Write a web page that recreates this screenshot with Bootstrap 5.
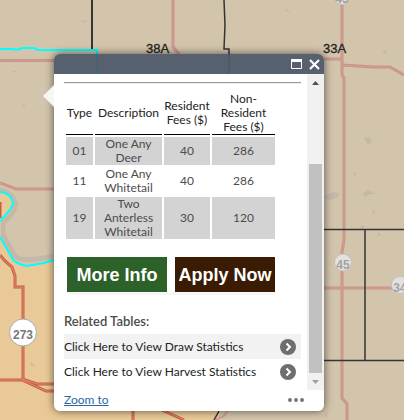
<!DOCTYPE html>
<html lang="en">
<head>
<meta charset="utf-8">
<meta name="viewport" content="width=device-width, initial-scale=1">
<title>Hunting Unit Map</title>
<link href="https://cdn.jsdelivr.net/npm/bootstrap@5.3.0/dist/css/bootstrap.min.css" rel="stylesheet">
<style>
body { font-family: Lato, "Liberation Sans", sans-serif; font-size: 12px; line-height: 14px; color: #4c4c4c; background: #d3c4ac; }
.map-view { min-height: 100vh; }
.map-canvas { position: absolute; inset: 0; width: 100%; height: 100%; }
.map-canvas text { font-family: "Liberation Sans", Arial, sans-serif; }
.map-popup { position: absolute; left: 54px; top: 54px; width: 270px; border-radius: 6px; box-shadow: 0 0 8px rgba(0,0,0,.6); }
.popup-arrow { position: absolute; left: -11px; top: 31px; width: 11px; height: 22px; background: #f6f6f6; clip-path: polygon(100% 0, 0 50%, 100% 100%); }
.popup-head { height: 20px; padding-right: 4px; gap: 7px; background: rgba(76,88,106,.93); border-radius: 6px 6px 0 0; }
.popup-body { padding: 8px 6px 6px 10px; }
.rule { height: 2px; background: #9a9a9a; border-bottom: 1px solid #eee; margin-bottom: 6px; }
.fees { width: 213px; table-layout: fixed; border-collapse: separate; border-spacing: 2px; text-align: center; }
.fees th { font-weight: 400; color: #222; border-bottom: 1px solid #000; padding: 0; }
.fees td { padding: 0; }
.fees tbody tr:nth-child(odd) td { background: #d3d3d3; }
.actions { width: 208px; gap: 8px; margin: 16px 0 0 3px; border-bottom: 3px solid #f7f7f7; }
.action { width: 100px; height: 35px; padding: 0; border: 0; border-radius: 0; color: #fff; font: 700 18px/32px "Liberation Sans", Arial, sans-serif; white-space: nowrap; }
.action:hover { color: #fff; }
.info-btn, .info-btn:hover { background: #2c6129; }
.apply-btn, .apply-btn:hover { background: #3a1c04; }
.related-title { font-size: 13px; font-weight: 600; margin: 19px 0 6px; line-height: 14px; }
.related-link { height: 25px; color: #222; padding-right: 5px; }
.related-link:first-of-type { background: #f2f2f2; }
.scroll-bar { width: 17px; background: #f1f1f1; }
.scroll-arrow { height: 17px; }
.scroll-thumb { width: 13px; height: 209px; background: #c1c1c1; }
.popup-foot { height: 21px; padding: 0 20px 2px 10px; }
.zoom-link { color: #2d67a5; font-size: 12px; }
.icon-btn { background: none; border: 0; padding: 0; line-height: 0; }
</style>
<script src="https://cdn.jsdelivr.net/npm/bootstrap@5.3.0/dist/js/bootstrap.bundle.min.js"></script>
</head>
<body>
<main class="map-view position-relative overflow-hidden">
<svg class="map-canvas" viewBox="0 0 404 420" preserveAspectRatio="xMinYMin slice" role="img" aria-label="Map of hunting units">
  <rect width="404" height="420" fill="#d3c4ac"/>
  <path d="M0 192Q10 192 13 201Q14 208 8 215L1 221V237L12 257Q17 264 27 266L54 260H230V400L216 420H0Z" fill="#e9c997"/>
  <g fill="none" stroke="#b9aea8" stroke-width="5" opacity=".55"><path d="M0 190Q12 192 16 204Q14 214 3 223V235L15 256Q22 263 54 256"/></g>
  <g fill="#beb3ad" opacity=".7"><path d="M324 197l8-5 8 1-2 4-9 4zM363 193l5-3 8 4-5 0-7 3zM364 138l5-1 3 4-4 4zM80 21l8-1-5 3zM286 9l5 3-6-1zM354 172l3 2-3 2zM372 210l4 2-3 3zM378 232l5 4-6-1zM360 225l5 1-3 4zM13 71l5 0-4 2zM23 104l3 1-3 2zM30 362l6 4-5 0zM324 415l4-3-2 6zM383 51l5-2-4 6z"/></g>
  <g fill="none" stroke="#c5948a" stroke-width="3">
    <path d="M0 60.500H54M173 0V47L179 54M342 0V75L344 78V240M343 65L373 67H390L404 75M324 59H342M0 183L16 189H54M344 240L342 252V398L347 404V420M324 288H404"/>
  </g>
  <g fill="none" stroke="#d99d91" stroke-width="1">
    <path d="M0 60.500H54M173 0V47L179 54M342 0V75L344 78V240M343 65L373 67H390L404 75M324 59H342M0 183L16 189H54M344 240L342 252V398L347 404V420M324 288H404"/>
  </g>
  <g fill="none" stroke="#c36045" stroke-width="3">
    <path d="M0 255L5 261L12 267L15 276V287H23V380M0 380H22L46 391H54M22 379L37 384H54M133 411V420M162 410L184 420M0 202V218"/>
  </g>
  <g fill="none" stroke="#e8896a" stroke-width="1">
    <path d="M0 255L5 261L12 267L15 276V287H23V380M0 380H22L46 391H54M22 379L37 384H54M133 411V420M162 410L184 420"/>
  </g>
  <path d="M219 411L214 420" stroke="#333" stroke-width="1.500"/>
  <path d="M228 410L224 416L216 420" fill="none" stroke="#d99d91" stroke-width="2"/>
  <g fill="none" stroke="#353535" stroke-width="1.500"><path d="M224 0L225 25L224 49H229V74M324 229.500H404M365 229V360M324 360.500H404"/><path d="M92 0V50" stroke-width="2"/></g>
  <path d="M0 49H13L17 50L22 48H34L38 50H97V74M0 192Q10 192 13 203Q12 209 0 221M0 237L12 258Q15 264 27 266L44 263L54 260" fill="none" stroke="#00ffff" stroke-width="2"/>
  <g font-size="13" font-weight="400" fill="#222" stroke="#222" stroke-width=".3"><text x="146" y="53">38A</text><text x="323" y="53">33A</text></g>
  <g stroke="#c2c2c2" fill="#e3e1de"><circle cx="342" cy="-4" r="8.500"/><circle cx="343" cy="262.500" r="8.500"/><circle cx="400" cy="285" r="8.500"/></g>
  <circle cx="23" cy="332.500" r="13.500" fill="#fff" stroke="#aaa"/>
  <g font-weight="700" fill="#a2a2a2" text-anchor="middle" font-size="12"><text x="343" y="269">45</text><text x="342" y="3">45</text><text x="400" y="292">34</text><text x="23" y="339" fill="#777">273</text></g>
</svg>

<section class="map-popup" aria-label="Unit details">
  <div class="popup-arrow"></div>
  <header class="popup-head d-flex justify-content-end align-items-center">
    <button class="icon-btn" type="button" aria-label="Maximize"><svg width="11" height="10"><path d="M.5 2V9.500H10.500V1" fill="none" stroke="#fff"/><path d="M0 0H11V3H0Z" fill="#fff"/></svg></button>
    <button class="icon-btn" type="button" aria-label="Close"><svg width="11" height="11"><path d="M1 1L10 10M10 1L1 10" stroke="#fff" stroke-width="2.200"/></svg></button>
  </header>
  <div class="d-flex bg-white">
    <div class="popup-body flex-grow-1">
      <div class="rule"></div>
      <table class="fees">
        <colgroup><col width="27"><col width="67"><col width="46"><col width="63"></colgroup>
        <thead><tr><th scope="col">Type</th><th scope="col">Description</th><th scope="col">Resident<br>Fees ($)</th><th scope="col">Non-<br>Resident<br>Fees ($)</th></tr></thead>
        <tbody>
          <tr><td>01</td><td>One Any<br>Deer</td><td>40</td><td>286</td></tr>
          <tr><td>11</td><td>One Any<br>Whitetail</td><td>40</td><td>286</td></tr>
          <tr><td>19</td><td>Two<br>Anterless<br>Whitetail</td><td>30</td><td>120</td></tr>
        </tbody>
      </table>
      <div class="actions d-flex">
        <button class="btn action info-btn" type="button">More Info</button>
        <button class="btn action apply-btn" type="button">Apply Now</button>
      </div>
      <h2 class="related-title">Related Tables:</h2>
      <nav aria-label="Related tables">
        <a class="related-link d-flex justify-content-between align-items-center text-decoration-none" href="#draw">Click Here to View Draw Statistics <svg width="16" height="16"><circle cx="8" cy="8" r="8" fill="#6e6e6e"/><path d="M6.500 4.500L10 8L6.500 11.500" fill="none" stroke="#fff" stroke-width="2"/></svg></a>
        <a class="related-link d-flex justify-content-between align-items-center text-decoration-none" href="#harvest">Click Here to View Harvest Statistics <svg width="16" height="16"><circle cx="8" cy="8" r="8" fill="#6e6e6e"/><path d="M6.500 4.500L10 8L6.500 11.500" fill="none" stroke="#fff" stroke-width="2"/></svg></a>
      </nav>
    </div>
    <div class="scroll-bar d-flex flex-column align-items-center" aria-hidden="true">
      <div class="scroll-arrow d-flex align-items-center"><svg width="7" height="4"><path d="M0 4L3.500 0L7 4Z" fill="#505050"/></svg></div>
      <div class="scroll-thumb mt-auto"></div>
      <div class="scroll-arrow d-flex align-items-center"><svg width="7" height="4"><path d="M0 0L3.500 4L7 0Z" fill="#a0a0a0"/></svg></div>
    </div>
  </div>
  <footer class="popup-foot d-flex justify-content-between align-items-center bg-white rounded-bottom">
    <a class="zoom-link" href="#zoom">Zoom to</a>
    <button class="icon-btn" type="button" aria-label="More options"><svg width="16" height="4"><g fill="#777"><circle cx="2" cy="2" r="2"/><circle cx="8" cy="2" r="2"/><circle cx="14" cy="2" r="2"/></g></svg></button>
  </footer>
</section>
</main>
</body>
</html>
